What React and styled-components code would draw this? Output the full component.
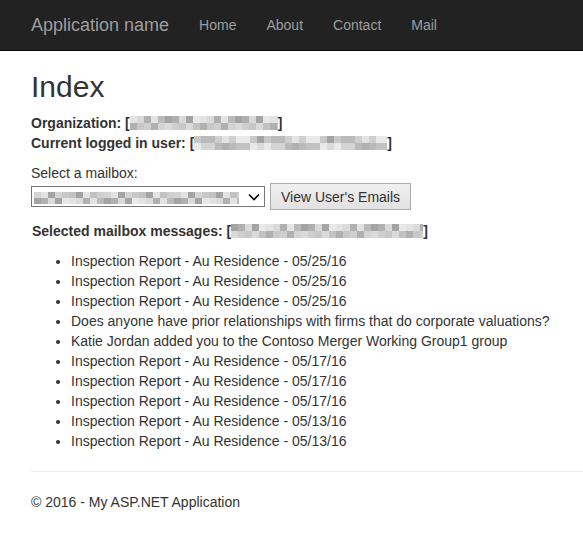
import React from 'react';
import styled, { createGlobalStyle } from 'styled-components';

const GlobalStyle = createGlobalStyle`
  body {
    margin: 0;
    font-family: "Liberation Sans", Arial, sans-serif;
    font-size: 14px;
    line-height: 20px;
    color: #333;
    background: #fff;
  }
`;

const Navbar = styled.nav`
  height: 50px;
  background: #222;
  border-bottom: 1px solid #080808;
  display: flex;
  align-items: center;
  padding: 0 16px;
`;

const Brand = styled.a`
  font-size: 18px;
  line-height: 20px;
  padding: 15px;
  color: #9d9d9d;
  text-decoration: none;
`;

const NavLink = styled.a`
  font-size: 14px;
  line-height: 20px;
  padding: 15px;
  color: #9d9d9d;
  text-decoration: none;
`;

const Body = styled.div`
  padding: 0 0 0 31px;
`;

const Title = styled.h1`
  font-size: 30px;
  font-weight: normal;
  line-height: 1.1;
  margin: 19px 0 10px;
`;

const Info = styled.p`
  margin: 0 0 10px;
  font-weight: bold;
`;

const Label = styled.div`
  margin-top: 0;
`;

const Controls = styled.div`
  display: flex;
  align-items: center;
  gap: 5px;
`;

const FakeSelect = styled.div`
  width: 234px;
  height: 21px;
  box-sizing: border-box;
  border: 1px solid #767676;
  display: flex;
  align-items: center;
  justify-content: space-between;
  padding: 0 4px 0 2px;
  background: #fff;
`;

const Button = styled.button`
  height: 27px;
  width: 141px;
  box-sizing: border-box;
  border: 1px solid #adadad;
  background: linear-gradient(#f0f0f0, #e1e1e1);
  font-family: "Liberation Sans", Arial, sans-serif;
  font-size: 14px;
  color: #333;
  padding: 0 8px;
`;

const Selected = styled.p`
  font-weight: bold;
  margin: 11px 0 10px 1px;
`;

const List = styled.ul`
  margin: 0 0 10px;
  padding-left: 40px;
`;

const Rule = styled.hr`
  margin: 20px 0;
  border: 0;
  border-top: 1px solid #eee;
`;

const Footer = styled.footer`
  p {
    margin: 0 0 10px;
  }
`;

const BlurRow = styled.span`
  display: inline-flex;
  flex-direction: column;
  vertical-align: top;
  margin-top: 3px;
  height: ${(p) => p.h}px;
  overflow: hidden;
`;

const BlurLine = styled.span`
  display: flex;
  height: 50%;
`;

const Cell = styled.span`
  width: 7px;
  height: 100%;
  flex: none;
`;

const shades = ['#cfcfcf', '#c2c2c2', '#dadada', '#bababa', '#e3e3e3', '#c8c8c8', '#d4d4d4', '#b0b0b0', '#e9e9e9', '#a4a4a4'];

function Blur({ width, seed = 1, h = 14 }) {
  const cols = Math.ceil(width / 7);
  const row = (r) =>
    Array.from({ length: cols }, (_, i) => {
      const v = (i * 7 + r * 13 + seed * 31 + ((i * i + seed) % 5)) % shades.length;
      return <Cell key={i} style={{ background: shades[v] }} />;
    });
  return (
    <BlurRow h={h} style={{ width }}>
      <BlurLine>{row(0)}</BlurLine>
      <BlurLine>{row(1)}</BlurLine>
    </BlurRow>
  );
}

const items = [
  'Inspection Report - Au Residence - 05/25/16',
  'Inspection Report - Au Residence - 05/25/16',
  'Inspection Report - Au Residence - 05/25/16',
  'Does anyone have prior relationships with firms that do corporate valuations?',
  'Katie Jordan added you to the Contoso Merger Working Group1 group',
  'Inspection Report - Au Residence - 05/17/16',
  'Inspection Report - Au Residence - 05/17/16',
  'Inspection Report - Au Residence - 05/17/16',
  'Inspection Report - Au Residence - 05/13/16',
  'Inspection Report - Au Residence - 05/13/16',
];

export default function App() {
  return (
    <>
      <GlobalStyle />
      <Navbar>
        <Brand>Application name</Brand>
        <NavLink>Home</NavLink>
        <NavLink>About</NavLink>
        <NavLink>Contact</NavLink>
        <NavLink>Mail</NavLink>
      </Navbar>
      <Body>
        <Title>Index</Title>
        <Info>
          Organization: [<Blur width={148} seed={2} />]
          <br />
          Current logged in user: [<Blur width={193} seed={5} />]
        </Info>
        <Label>Select a mailbox:</Label>
        <Controls>
          <FakeSelect>
            <Blur width={205} seed={3} h={12} />
            <svg width="12" height="8" viewBox="0 0 12 8">
              <path d="M1 1.5 L6 6.5 L11 1.5" fill="none" stroke="#000" strokeWidth="1.6" />
            </svg>
          </FakeSelect>
          <Button>View User's Emails</Button>
        </Controls>
        <Selected>
          Selected mailbox messages: [<Blur width={192} seed={7} />]
        </Selected>
        <List>
          {items.map((t, i) => (
            <li key={i}>{t}</li>
          ))}
        </List>
        <Rule />
        <Footer>
          <p>© 2016 - My ASP.NET Application</p>
        </Footer>
      </Body>
    </>
  );
}
